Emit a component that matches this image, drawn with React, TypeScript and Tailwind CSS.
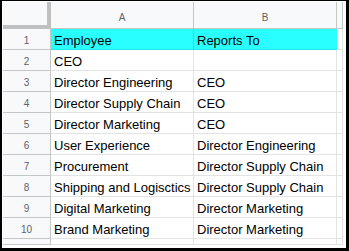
const rows = [
  ["Employee", "Reports To"],
  ["CEO", ""],
  ["Director Engineering", "CEO"],
  ["Director Supply Chain", "CEO"],
  ["Director Marketing", "CEO"],
  ["User Experience", "Director Engineering"],
  ["Procurement", "Director Supply Chain"],
  ["Shipping and Logisctics", "Director Supply Chain"],
  ["Digital Marketing", "Director Marketing"],
  ["Brand Marketing", "Director Marketing"],
]

export default function App() {
  return (
    <div className="w-[349px] h-[251px] bg-white border-t border-l-2 border-r-[3px] border-b-[3px] border-black pt-px pl-px overflow-hidden font-['Liberation_Sans',Arial,sans-serif]">
      <div className="grid grid-cols-[48px_143px_143px_6px] grid-rows-[27px_repeat(10,21px)_6px] w-[340px]">
        {/* header row */}
        <div className="bg-[#f8f9fa] border-r-4 border-b-4 border-[#c0c0c0]" />
        <div className="bg-[#f8f9fa] border-r border-b border-[#c4c7c5] flex items-center justify-center pt-[5px] text-[10px] text-[#5f6368]">
          A
        </div>
        <div className="bg-[#f8f9fa] border-r border-b border-[#c4c7c5] flex items-center justify-center pt-[5px] text-[10px] text-[#5f6368]">
          B
        </div>
        <div className="bg-[#f8f9fa] border-r border-b border-[#c4c7c5]" />

        {rows.map((r, i) => (
          <div key={i} className="contents">
            <div className="bg-[#f8f9fa] border-r border-b border-[#c4c7c5] flex items-center justify-center pt-[3px] text-[10px] text-[#5f6368]">
              {i + 1}
            </div>
            <div
              className={`${i === 0 ? "bg-[#2affff] border-[#22e6e6]" : "border-[#e2e3e3]"} border-r border-b pl-[3px] pt-[3px] text-[13px] leading-[17px] text-black whitespace-nowrap overflow-hidden`}
            >
              {r[0]}
            </div>
            <div
              className={`${i === 0 ? "bg-[#2affff] border-r-[#2affff] border-b-[#22e6e6]" : "border-[#e2e3e3]"} border-r border-b pl-[3px] pt-[3px] text-[13px] leading-[17px] text-black whitespace-nowrap overflow-hidden`}
            >
              {r[1]}
            </div>
            <div className="border-r border-b border-[#e2e3e3]" />
          </div>
        ))}

        {/* partial row 11 */}
        <div className="bg-[#f8f9fa] border-r border-b border-[#c4c7c5]" />
        <div className="border-r border-b border-[#e2e3e3]" />
        <div className="border-r border-b border-[#e2e3e3]" />
        <div className="border-r border-b border-[#e2e3e3]" />
      </div>
    </div>
  )
}
